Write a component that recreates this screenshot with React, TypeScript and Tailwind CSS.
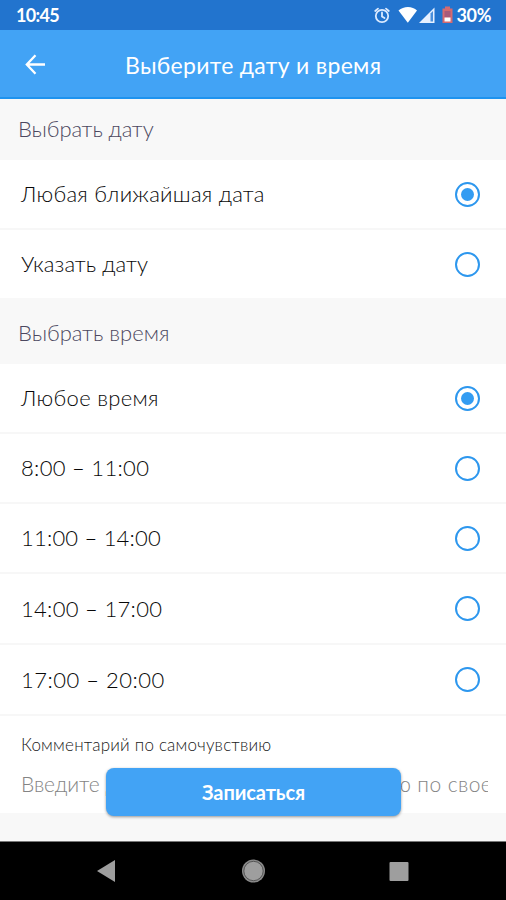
import type { ReactNode } from "react";

function Label({ children, className }: { children: ReactNode; className: string }) {
  return <span className={`block whitespace-nowrap ${className}`}>{children}</span>;
}

function Radio({ checked }: { checked?: boolean }) {
  return (
    <span className="flex size-[25px] items-center justify-center rounded-full border-2 border-[#2d97ee]">
      {checked && <span className="size-[13px] rounded-full bg-[#339cf2]" />}
    </span>
  );
}

function Row({ label, height, spacing, checked, last }: { label: string; height: string; spacing: string; checked?: boolean; last?: boolean }) {
  return (
    <div className={`flex shrink-0 items-center justify-between pr-[26px] pl-[21px] ${height} ${last ? "" : "border-b-2 border-[#f7f7f7]"}`}>
      <Label className={`text-[22px] leading-7 font-light text-[#080808] ${spacing}`}>{label}</Label>
      <Radio checked={checked} />
    </div>
  );
}

function StatusBar() {
  return (
    <div className="flex h-[30px] shrink-0 items-center justify-between bg-[#2274ce] pr-[15px] pl-[16px] text-white">
      <Label className="text-[18px] leading-[31px] font-bold tracking-[-0.7px]">10:45</Label>
      <div className="flex h-[30px] items-center">
        <svg className="mr-[3px]" width="81" height="30" viewBox="0 0 81 30">
          <g fill="none" stroke="#dbeaff" strokeWidth="1.8" strokeLinecap="round">
            <circle cx="9" cy="16" r="6.2" />
            <path d="M2.2 11 5 8.6M15.8 11 13 8.6M9 12.4V16.4L11.500 18" />
          </g>
          <path d="M25.500 10.500C30.500 5.800 39.500 5.800 44 10.500L34.800 22.800Z" fill="#fff" />
          <path d="M46 23 61.500 7.500V23Z" fill="#e6f0ff" />
          <path d="M57.500 13.500V21.500H60V11Z" fill="#4a8fdb" />
          <path d="M69.500 8.500H72V6.500H77V8.500H79.500V23H69.500Z" fill="#d56a70" />
          <path d="M71.500 11H77.500V17.500H71.500Z" fill="#a85a7a" />
          <path d="M71.500 17.500H77.500V21.500H71.500Z" fill="#fff" />
        </svg>
        <Label className="text-[18px] leading-[31px] font-bold tracking-[-0.4px]">30%</Label>
      </div>
    </div>
  );
}

function NavBar() {
  return (
    <div className="flex h-[59px] shrink-0 items-center border-t border-[#777] bg-black pl-[96px]">
      <svg width="314" height="28" viewBox="0 0 314 28">
        <path d="M1 14 19 3V25Z" fill="#9e9e9e" />
        <circle cx="157.500" cy="14" r="11.500" fill="#8a8a8a" />
        <circle cx="157.500" cy="14" r="9.700" fill="#9e9e9e" stroke="#444" strokeWidth="0.8" />
        <rect x="293.500" y="5" width="19" height="19" rx="1" fill="#9e9e9e" />
      </svg>
    </div>
  );
}

export default function App() {
  return (
    <div className="flex h-[900px] w-[506px] flex-col overflow-hidden bg-white font-['Lato','Noto_Sans',sans-serif]">
      <StatusBar />
      <header className="flex h-[69px] shrink-0 items-center border-b-2 border-[#1e93ef] bg-[#42a3f5] pl-[25px] text-white">
        <svg width="21" height="22" viewBox="0 0 21 22" fill="none" stroke="#fff" strokeWidth="2.300">
          <path d="M20 11.500H2M10.500 2.300 1.800 11.500 10.500 20.700" />
        </svg>
        <Label className="mt-[3px] ml-[79px] text-[23px] leading-8 tracking-[0.3px]">Выберите дату и время</Label>
      </header>
      <div className="flex h-[61px] shrink-0 items-center bg-[#f8f8f8] pb-px pl-[18px]">
        <Label className="text-[22px] leading-7 font-light tracking-[-0.1px] text-[#4c4860]">Выбрать дату</Label>
      </div>
      <Row label="Любая ближайшая дата" height="h-[70px]" spacing="tracking-[0.25px]" checked />
      <Row label="Указать дату" height="h-[68px]" spacing="tracking-[0.1px]" last />
      <div className="flex h-[66px] shrink-0 items-center bg-[#f8f8f8] pt-1 pl-[18px]">
        <Label className="text-[22px] leading-7 font-light text-[#4c4860]">Выбрать время</Label>
      </div>
      <Row label="Любое время" height="h-[70px]" spacing="tracking-[0.3px]" checked />
      <Row label="8:00 – 11:00" height="h-[70px]" spacing="tracking-[0.3px]" />
      <Row label="11:00 – 14:00" height="h-[70px]" spacing="tracking-[0.2px]" />
      <Row label="14:00 – 17:00" height="h-[71px]" spacing="tracking-[0.3px]" />
      <Row label="17:00 – 20:00" height="h-[71px]" spacing="tracking-[0.5px]" />
      <div className="relative h-[125px] shrink-0 bg-[#f8f8f8]">
        <div className="h-[97px] bg-white pt-[17px] pl-[21px]">
          <Label className="text-[17px] leading-6 font-light tracking-[0.2px] text-[#202020]">Комментарий по самочувствию</Label>
          <div className="mt-[13px] w-[467px] overflow-hidden">
            <Label className="text-[21px] leading-7 font-light tracking-[0.42px] text-[#848484]">
              <span className="tracking-[-0.1px]">Введите</span> дополнительную информацию по своему
            </Label>
          </div>
        </div>
        <button className="absolute top-[52px] left-[106px] flex h-[48px] w-[295px] items-center justify-center rounded-[8px] bg-[#42a3f5] text-white shadow-[0_1px_3px_rgba(0,0,0,0.4)]">
          <Label className="text-[20px] leading-7 font-bold tracking-[-0.1px]">Записаться</Label>
        </button>
      </div>
      <NavBar />
    </div>
  );
}
